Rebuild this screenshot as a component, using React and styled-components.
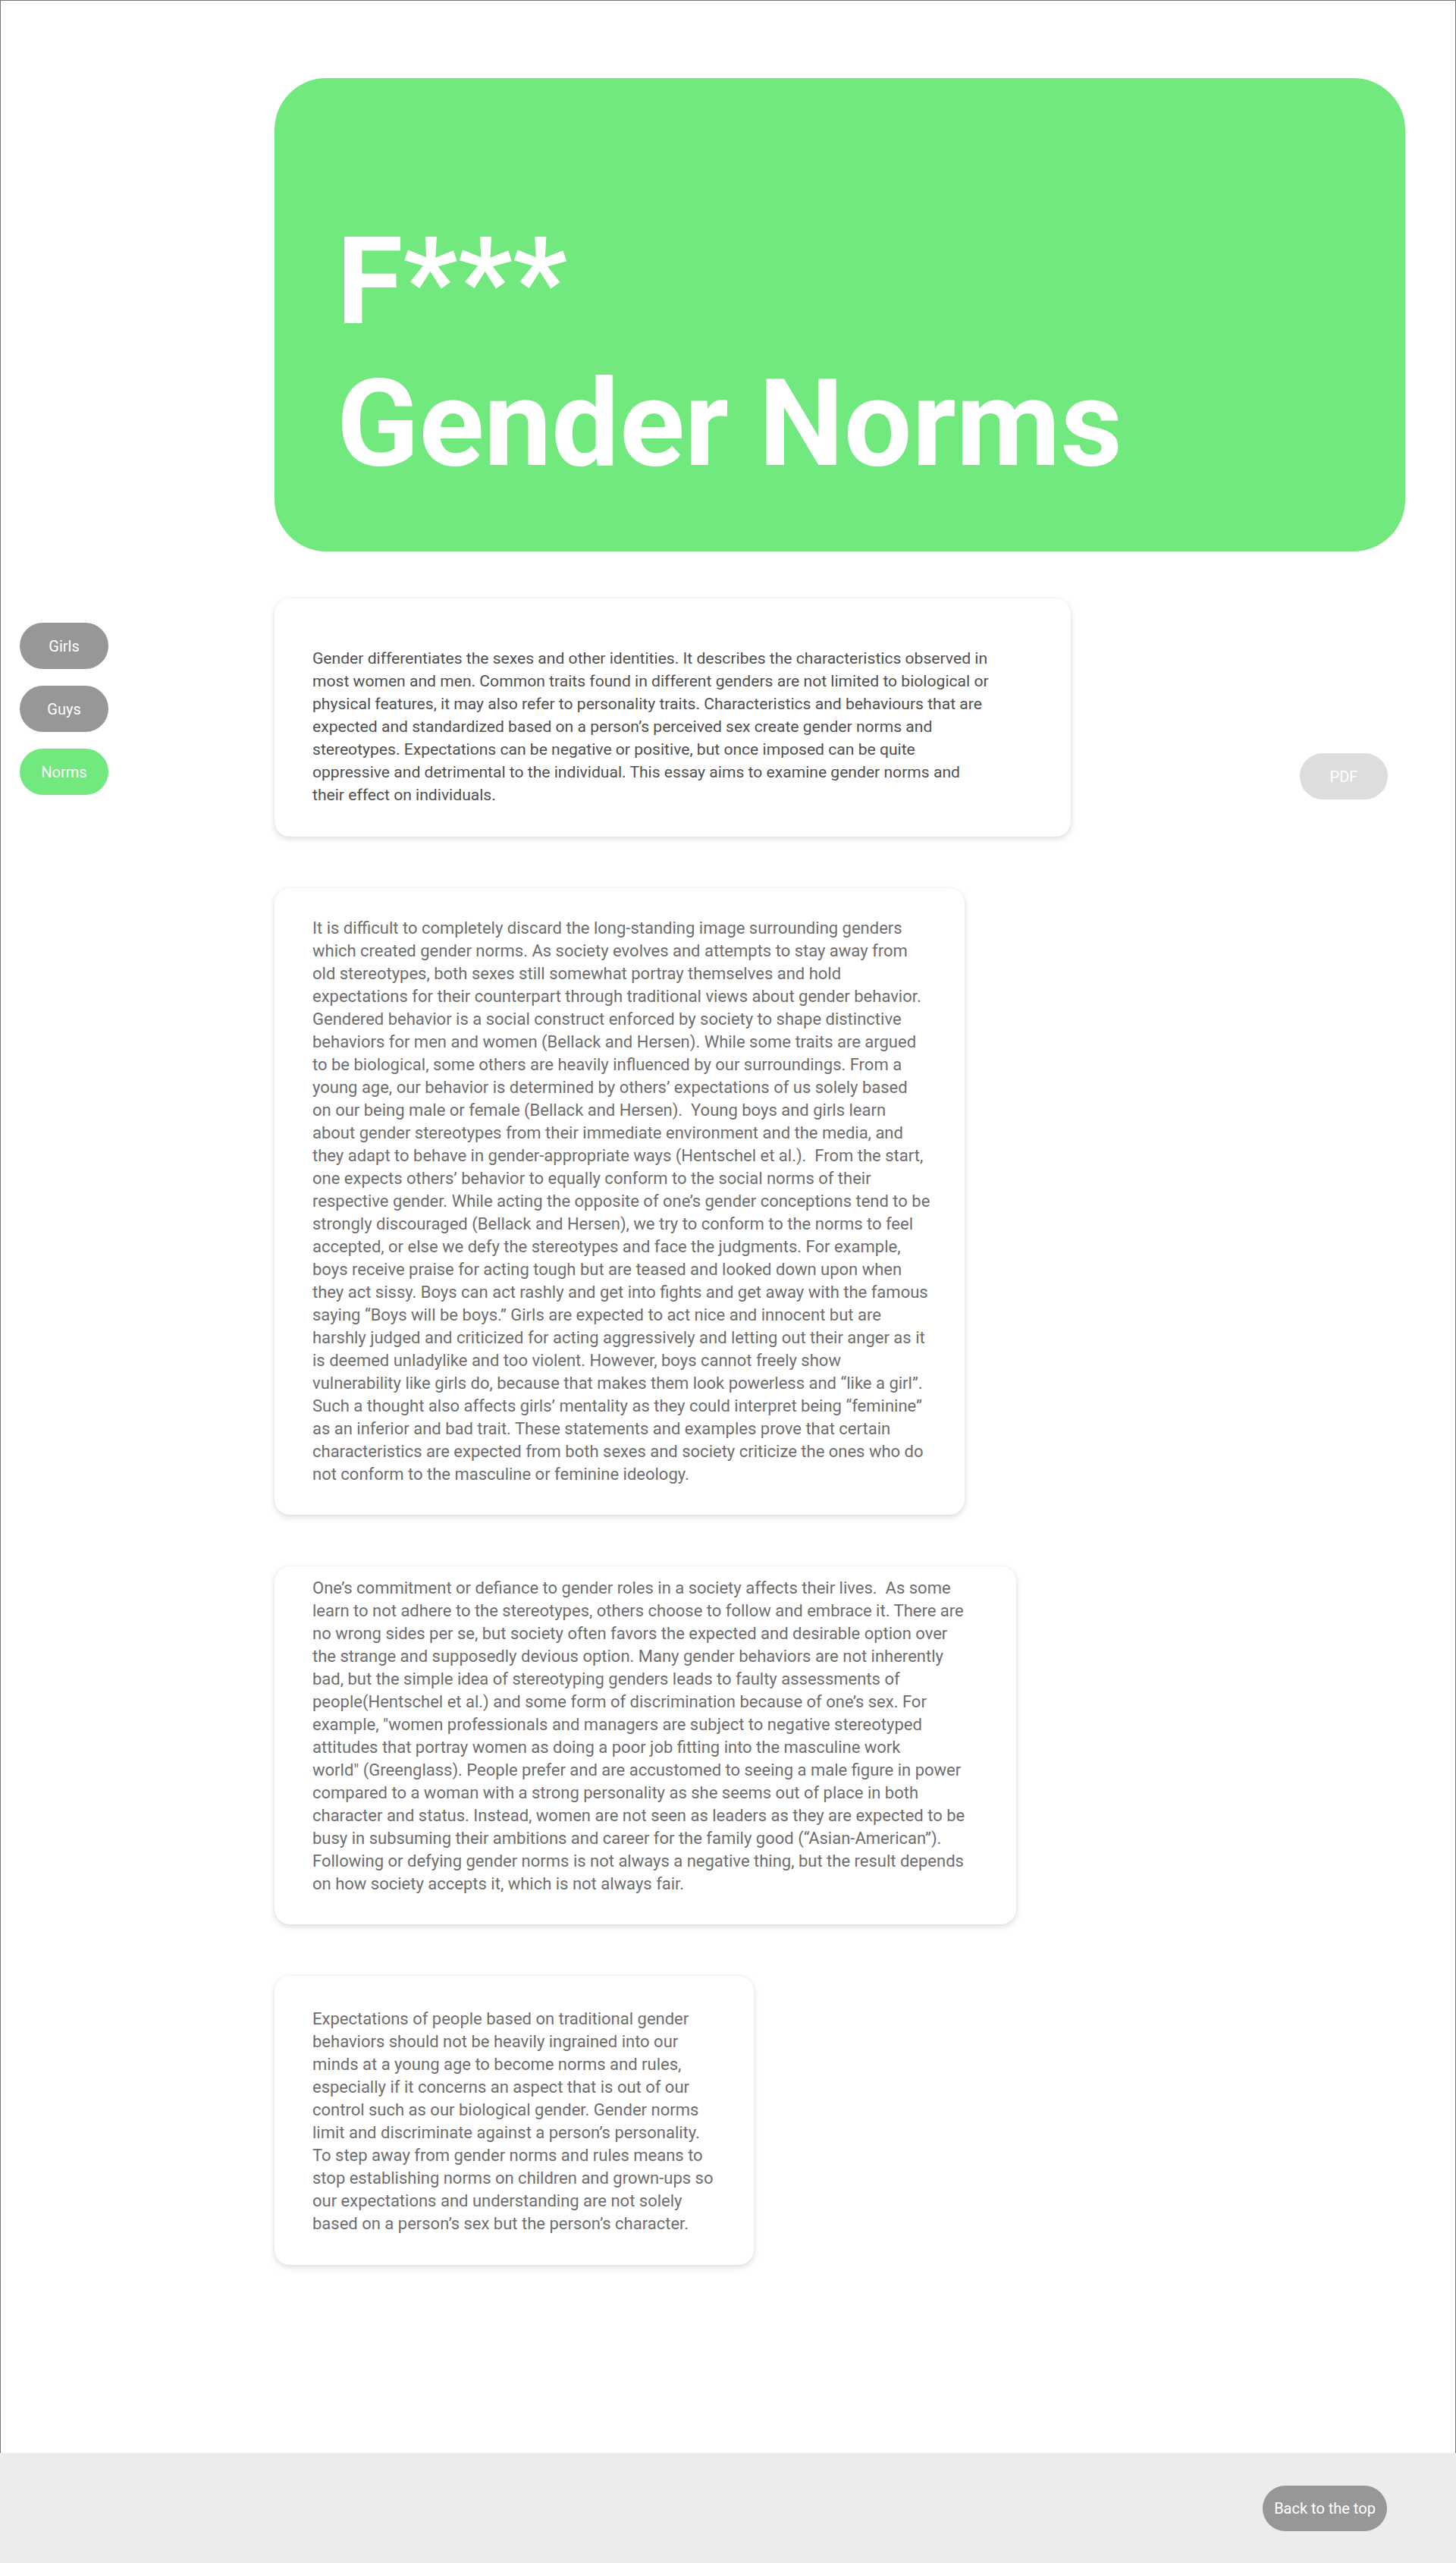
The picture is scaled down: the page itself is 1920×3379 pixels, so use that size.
import styled, { createGlobalStyle } from 'styled-components';

const GlobalStyle = createGlobalStyle`
  html, body {
    margin: 0;
    padding: 0;
    background: #ffffff;
    font-family: Roboto, "Liberation Sans", Arial, sans-serif;
  }
  * { box-sizing: border-box; }
`

const Page = styled.div`
  min-height: 3234px;
  border: 1px solid #777777;
  border-bottom: none;
  display: flex;
  flex-direction: column;
`

const Hero = styled.header`
  margin: 102px 66px 0 361px;
  height: 624px;
  background: #72e97f;
  border-radius: 68px;
  padding: 175px 0 0 82px;
`

const Title = styled.h1`
  margin: 0;
  color: #ffffff;
  font-family: Roboto, "Liberation Sans", Arial, sans-serif;
  font-weight: 700;
  font-size: 159px;
  line-height: 187px;
`

const Body = styled.main`
  display: grid;
  grid-template-columns: 361px 1fr auto;
  align-items: start;
  margin-top: 62px;
`

const Nav = styled.nav`
  display: flex;
  flex-direction: column;
  gap: 22px;
  padding: 32px 0 0 25px;
`

const Pill = styled.button`
  width: ${p => p.$w || 117}px;
  height: ${p => p.$h || 61}px;
  border: none;
  border-radius: 31px;
  background: ${p => p.$bg || '#979797'};
  color: #ffffff;
  font-family: Roboto, "Liberation Sans", Arial, sans-serif;
  font-size: 20px;
  padding: 0;
  cursor: pointer;
`

const Cards = styled.section`
  display: flex;
  flex-direction: column;
  align-items: flex-start;
  gap: 68px;
`

const Card = styled.article`
  width: ${p => p.$w}px;
  padding: ${p => p.$pad};
  background: #ffffff;
  border-radius: 20px;
  box-shadow: 0 3px 8px rgba(0, 0, 0, 0.14), 0 0 2px rgba(0, 0, 0, 0.06);
`

const Text = styled.p`
  margin: 0;
  font-family: Roboto, "Liberation Sans", Arial, sans-serif;
  font-size: ${p => p.$size || 22}px;
  line-height: 30px;
  color: ${p => (p.$dark ? '#505050' : '#6e6e6e')};
`

const Line = styled.span`
  display: block;
  white-space: pre;
`

const Aside = styled.aside`
  padding: 204px 89px 0 0;
`

const Footer = styled.footer`
  height: 145px;
  background: #ececec;
  display: flex;
  justify-content: flex-end;
  align-items: center;
  padding-right: 91px;
`

const intro = [
  'Gender differentiates the sexes and other identities. It describes the characteristics observed in',
  'most women and men. Common traits found in different genders are not limited to biological or',
  'physical features, it may also refer to personality traits. Characteristics and behaviours that are',
  'expected and standardized based on a person’s perceived sex create gender norms and',
  'stereotypes. Expectations can be negative or positive, but once imposed can be quite',
  'oppressive and detrimental to the individual. This essay aims to examine gender norms and',
  'their effect on individuals.',
]

const second = [
  'It is difficult to completely discard the long-standing image surrounding genders',
  'which created gender norms. As society evolves and attempts to stay away from',
  'old stereotypes, both sexes still somewhat portray themselves and hold',
  'expectations for their counterpart through traditional views about gender behavior.',
  'Gendered behavior is a social construct enforced by society to shape distinctive',
  'behaviors for men and women (Bellack and Hersen). While some traits are argued',
  'to be biological, some others are heavily influenced by our surroundings. From a',
  'young age, our behavior is determined by others’ expectations of us solely based',
  'on our being male or female (Bellack and Hersen).  Young boys and girls learn',
  'about gender stereotypes from their immediate environment and the media, and',
  'they adapt to behave in gender-appropriate ways (Hentschel et al.).  From the start,',
  'one expects others’ behavior to equally conform to the social norms of their',
  'respective gender. While acting the opposite of one’s gender conceptions tend to be',
  'strongly discouraged (Bellack and Hersen), we try to conform to the norms to feel',
  'accepted, or else we defy the stereotypes and face the judgments. For example,',
  'boys receive praise for acting tough but are teased and looked down upon when',
  'they act sissy. Boys can act rashly and get into fights and get away with the famous',
  'saying “Boys will be boys.” Girls are expected to act nice and innocent but are',
  'harshly judged and criticized for acting aggressively and letting out their anger as it',
  'is deemed unladylike and too violent. However, boys cannot freely show',
  'vulnerability like girls do, because that makes them look powerless and “like a girl”.',
  'Such a thought also affects girls’ mentality as they could interpret being “feminine”',
  'as an inferior and bad trait. These statements and examples prove that certain',
  'characteristics are expected from both sexes and society criticize the ones who do',
  'not conform to the masculine or feminine ideology.',
]

const third = [
  'One’s commitment or defiance to gender roles in a society affects their lives.  As some',
  'learn to not adhere to the stereotypes, others choose to follow and embrace it. There are',
  'no wrong sides per se, but society often favors the expected and desirable option over',
  'the strange and supposedly devious option. Many gender behaviors are not inherently',
  'bad, but the simple idea of stereotyping genders leads to faulty assessments of',
  'people(Hentschel et al.) and some form of discrimination because of one’s sex. For',
  'example, "women professionals and managers are subject to negative stereotyped',
  'attitudes that portray women as doing a poor job fitting into the masculine work',
  'world" (Greenglass). People prefer and are accustomed to seeing a male figure in power',
  'compared to a woman with a strong personality as she seems out of place in both',
  'character and status. Instead, women are not seen as leaders as they are expected to be',
  'busy in subsuming their ambitions and career for the family good (“Asian-American”).',
  'Following or defying gender norms is not always a negative thing, but the result depends',
  'on how society accepts it, which is not always fair.',
]

const fourth = [
  'Expectations of people based on traditional gender',
  'behaviors should not be heavily ingrained into our',
  'minds at a young age to become norms and rules,',
  'especially if it concerns an aspect that is out of our',
  'control such as our biological gender. Gender norms',
  'limit and discriminate against a person’s personality.',
  'To step away from gender norms and rules means to',
  'stop establishing norms on children and grown-ups so',
  'our expectations and understanding are not solely',
  'based on a person’s sex but the person’s character.',
]

const Paragraph = ({ lines, ...rest }) => (
  <Text {...rest}>
    {lines.map((l, i) => <Line key={i}>{l}</Line>)}
  </Text>
)

const App = () => {
  return (
    <>
      <GlobalStyle />
      <Page>
        <Hero>
          <Title>F***<br />Gender Norms</Title>
        </Hero>
        <Body>
          <Nav>
            <Pill>Girls</Pill>
            <Pill>Guys</Pill>
            <Pill $bg="#72e97f">Norms</Pill>
          </Nav>
          <Cards>
            <Card $w={1050} $pad="64px 50px 40px 50px">
              <Paragraph lines={intro} $dark $size={21.1} />
            </Card>
            <Card $w={910} $pad="38px 40px 38px 50px">
              <Paragraph lines={second} />
            </Card>
            <Card $w={978} $pad="14px 50px 38px 50px">
              <Paragraph lines={third} />
            </Card>
            <Card $w={632} $pad="42px 40px 39px 50px">
              <Paragraph lines={fourth} />
            </Card>
          </Cards>
          <Aside>
            <Pill $bg="#dddddd" $w={116}>PDF</Pill>
          </Aside>
        </Body>
      </Page>
      <Footer>
        <Pill $w={164} $h={60}>Back to the top</Pill>
      </Footer>
    </>
  )
}

export default App
